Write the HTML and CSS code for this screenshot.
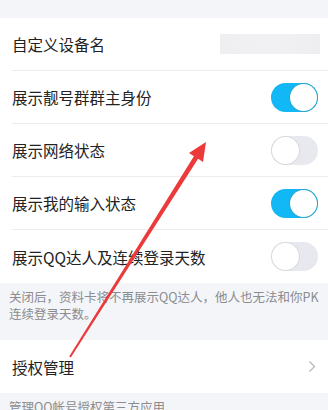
FILE: index.html
```html
<!DOCTYPE html>
<html lang="zh">
<head>
<meta charset="utf-8">
<link rel="stylesheet" href="styles.css">
</head>
<body>
<div class="page">
  <div class="top-gap"></div>
  <div class="group">
    <div class="row">
      <span class="label">自定义设备名</span>
      <span class="blur"></span>
    </div>
    <div class="row">
      <span class="label">展示靓号群群主身份</span>
      <span class="switch on"><span class="knob"></span></span>
    </div>
    <div class="row">
      <span class="label">展示网络状态</span>
      <span class="switch"><span class="knob"></span></span>
    </div>
    <div class="row">
      <span class="label">展示我的输入状态</span>
      <span class="switch on"><span class="knob"></span></span>
    </div>
    <div class="row last">
      <span class="label">展示QQ达人及连续登录天数</span>
      <span class="switch"><span class="knob"></span></span>
    </div>
  </div>
  <div class="note">关闭后，资料卡将不再展示QQ达人，他人也无法和你PK连续登录天数。</div>
  <div class="group">
    <div class="row last">
      <span class="label">授权管理</span>
      <svg class="chevron" width="8" height="13" viewBox="0 0 8 13"><path d="M1.5 1.5 L6.5 6.5 L1.5 11.5" fill="none" stroke="#b8b8bc" stroke-width="1.3"/></svg>
    </div>
  </div>
  <div class="note">管理QQ帐号授权第三方应用</div>
  <svg class="arrow" width="328" height="410" viewBox="0 0 328 410">
    <polygon points="69.2,356.5 70.8,357.5 198.1,158.8 203,162 206,142 189,153 193.9,156.2" fill="#ec3a3a"/>
  </svg>
</div>
</body>
</html>
```
FILE: styles.css
```css
html, body {
  margin: 0;
  padding: 0;
  background: #f3f5f8;
}
body {
  font-family: "Noto Sans CJK SC", "Noto Sans", sans-serif;
  color: #222;
}
.page {
  position: relative;
  width: 328px;
  height: 410px;
  overflow: hidden;
}
.top-gap {
  height: 18px;
}
.group {
  background: #fff;
}
.row {
  height: 52px;
  margin-left: 12px;
  padding-right: 10px;
  border-bottom: 1px solid #ececef;
  display: flex;
  align-items: center;
  justify-content: space-between;
  box-sizing: content-box;
}
.row.last {
  border-bottom: none;
  height: 53px;
}
.label {
  font-size: 15.5px;
  line-height: 20px;
}
.blur {
  width: 100px;
  height: 20px;
  margin-right: -2px;
  background: linear-gradient(90deg, #efeff1, #f1f1f3 50%, #eeeef0);
}
.switch {
  width: 47px;
  height: 29px;
  border-radius: 15px;
  background: #e8e9ee;
  display: flex;
  align-items: center;
  padding: 0 1px;
  box-sizing: border-box;
}
.switch .knob {
  width: 27px;
  height: 27px;
  border-radius: 50%;
  background: #fff;
  box-shadow: 0 0 0 1px #d9dadf;
}
.switch.on {
  background: #12b7f5;
  justify-content: flex-end;
}
.switch.on .knob {
  box-shadow: 0 0 0 1px #2aa7cf;
}
.chevron {
  margin-right: 2px;
}
.note {
  font-size: 12.5px;
  line-height: 17px;
  color: #8a8c90;
  padding: 5px 4px 18px 9px;
}
.arrow {
  position: absolute;
  left: 0;
  top: 0;
  pointer-events: none;
}
```
